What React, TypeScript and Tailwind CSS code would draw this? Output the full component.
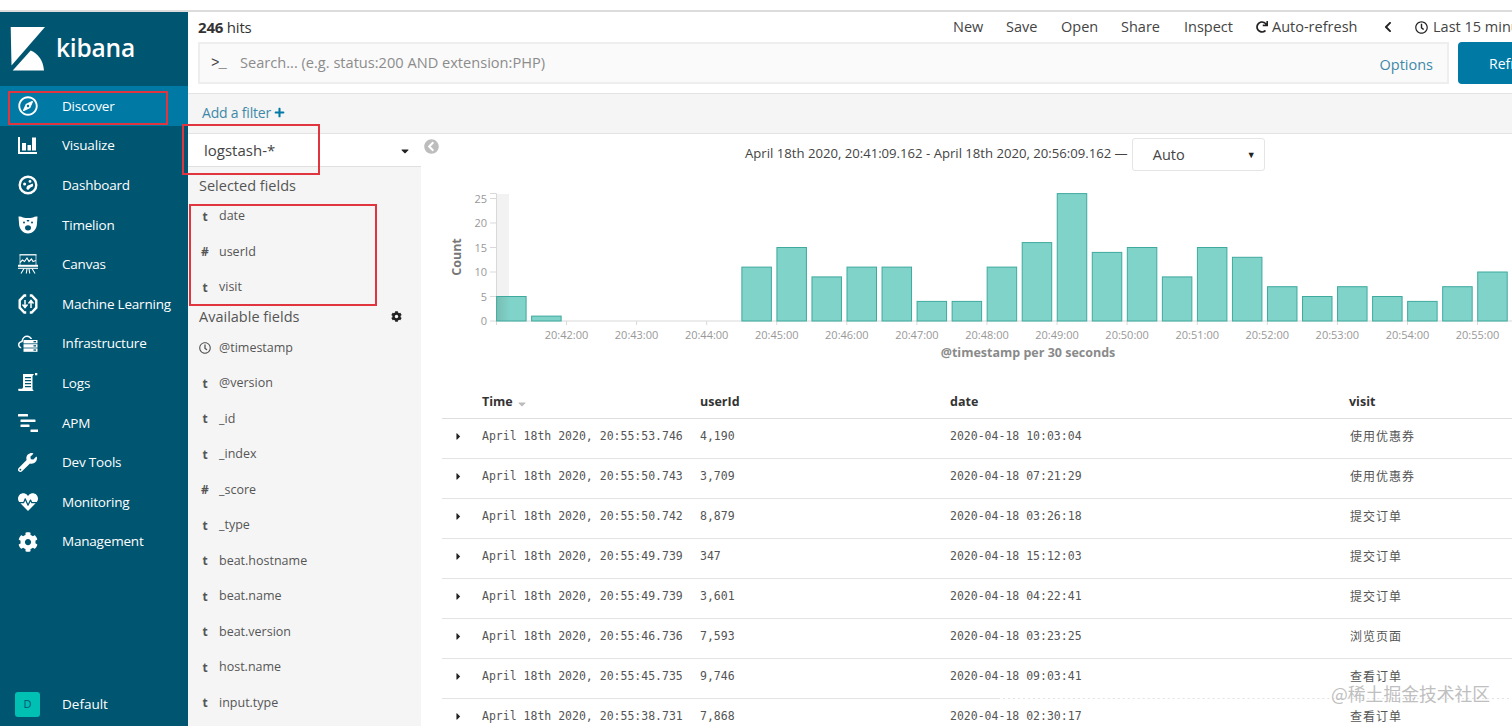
import React from "react";
import { FaCaretDown, FaCaretRight, FaChevronCircleLeft, FaChevronLeft, FaCog, FaHeartbeat, FaPlus, FaRedo, FaRegClock, FaRegCompass, FaWrench } from "react-icons/fa";

const LogoMark = () => (
  <svg width="36" height="45" viewBox="0 0 36 45" fill="white" className="shrink-0">
    <path d="M0.7 0 H35 L1.5 38.5 Z" />
    <path d="M2.7 43.5 H34 C33 33 28 26.5 20.7 23.5 Z" />
  </svg>
);

const I = ({ children }: { children: React.ReactNode }) => (
  <svg width="20" height="20" viewBox="0 0 20 20" fill="white">{children}</svg>
);

const Visualize = () => (
  <I>
    <path d="M0 1h2v15h17v2H0z" />
    <rect x="4" y="7" width="4" height="7.5" />
    <rect x="9.5" y="9" width="3.5" height="5.5" />
    <rect x="14" y="1.5" width="4" height="13" />
  </I>
);
const Dashboard = () => (
  <I>
    <path fillRule="evenodd" d="M10 .5a9.5 9.5 0 1 1 0 19 9.5 9.5 0 0 1 0-19zm0 2.4a7.1 7.1 0 1 0 0 14.2 7.1 7.1 0 0 0 0-14.2z" />
    <circle cx="6.6" cy="9" r="1.5" />
    <circle cx="12" cy="6.4" r="1.4" />
    <path d="M14.4 8.6a2 2 0 0 1-.6 3.5c-1.2.4-1.8 1.1-3 2.3-1.2.9-2.7-.2-2.3-1.7.4-1.5 1.5-2.3 2.7-2.6 1.3-.3 2-.9 3.2-1.5z" />
  </I>
);
const Timelion = () => (
  <I>
    <path d="M0.5 1.5Q3 1 5 2.5L7.5 3H12.5L15 2.5Q17 1 19.5 1.5L19 8C19 14 15 18.5 10 18.5S1 14 1 8Z" />
    <circle cx="6" cy="7.5" r="1" fill="#005571" />
    <circle cx="14" cy="7.5" r="1" fill="#005571" />
    <ellipse cx="10" cy="12.8" rx="3" ry="2.6" fill="#005571" />
    <rect x="8.8" y="5" width="2.4" height="1.4" fill="#005571" />
  </I>
);
const Canvas = () => (
  <svg width="20" height="20" viewBox="0 0 20 20" fill="none" stroke="white" strokeWidth="1.1">
    <path d="M1.5 .8H18.5" strokeWidth="1.3" />
    <path d="M2 1v10M18 1v10" strokeWidth="0.7" />
    <path d="M2 8.5l2.5-2.5 2 1.5L9 4l2 3.5L13.5 5l1.5 2.5L18 6.5" />
    <path d="M0 11.8h20" strokeWidth="2" />
    <path d="M0 14.3h20" strokeWidth="1.1" />
    <path d="M6 14.5l-3 5M9 14.5L8.3 19.5M11 14.5l.7 5M14 14.5l3 5" />
  </svg>
);
const Machine = () => (
  <svg width="20" height="20" viewBox="0 0 20 20" fill="none" stroke="white" strokeWidth="2.4">
    <path d="M8.2 1.5H6.3L1.7 6.3v7.4L6.3 18.5H8.2M11.8 1.5h1.9l4.6 4.8v7.4L13.7 18.5H11.8" />
    <path d="M7 6v7M4.5 10.5L7 13.5l2.5-3M13 14V7M10.5 9.5L13 6.5l2.5 3" strokeWidth="1.5" />
  </svg>
);
const Infrastructure = () => (
  <I>
    <path d="M3.2 14.5C1.2 14 0 12.5 0 10.7c0-1.900 1.4-3.400 3.300-3.700C4 3.500 6.500 1.500 9 1.500c2.300 0 4.200 1.200 5.200 3.500h-1.700C11.600 3.700 10.400 3 9 3 6.800 3 4.900 4.900 4.600 8.300 2.800 8.100 1.500 9.200 1.500 10.700c0 1.300.8 2.200 1.700 2.400z" />
    <rect x="5.5" y="6" width="14" height="3.4" />
    <rect x="5.5" y="10.2" width="14" height="3.4" />
    <rect x="5.5" y="14.4" width="14" height="3.4" />
    <rect x="15.5" y="7" width="2.5" height="1.3" fill="#005571" />
    <rect x="15.5" y="11.2" width="2.5" height="1.3" fill="#005571" />
    <rect x="15.5" y="15.4" width="2.5" height="1.3" fill="#005571" />
  </I>
);
const Logs = () => (
  <I>
    <path fillRule="evenodd" d="M5 1h11l-1.500 2v12.500c0 1 .5 2 1.500 2.500H1c-1 0-1-1.500-.5-2.200h3c.8 0 1.500-.7 1.500-1.500zm2 3v1.300h6V4zm0 3v1.300h6V7zm0 3v1.300h6V10zm0 3v1.300h6V13z" />
    <rect x="17" y="0" width="2.3" height="2.3" />
  </I>
);
const Apm = () => (
  <I>
    <rect x="0" y="1" width="10" height="2.5" rx="0.5" />
    <rect x="2.5" y="6.5" width="15" height="2.5" rx="0.5" />
    <rect x="2.5" y="11.5" width="9" height="2.5" rx="0.5" />
    <rect x="12.5" y="16.5" width="8" height="2.5" rx="0.5" />
  </I>
);

const nav: [string, React.ReactNode][] = [
  ["Discover", <FaRegCompass size={20} color="white" />],
  ["Visualize", <Visualize />],
  ["Dashboard", <Dashboard />],
  ["Timelion", <Timelion />],
  ["Canvas", <Canvas />],
  ["Machine Learning", <Machine />],
  ["Infrastructure", <Infrastructure />],
  ["Logs", <Logs />],
  ["APM", <Apm />],
  ["Dev Tools", <FaWrench size={19} color="white" />],
  ["Monitoring", <FaHeartbeat size={20} color="white" />],
  ["Management", <FaCog size={20} color="white" />],
];

const fields: [string, string][] = [
  ["clock", "@timestamp"],
  ["t", "@version"],
  ["t", "_id"],
  ["t", "_index"],
  ["#", "_score"],
  ["t", "_type"],
  ["t", "beat.hostname"],
  ["t", "beat.name"],
  ["t", "beat.version"],
  ["t", "host.name"],
  ["t", "input.type"],
];

const Field = ({ type, name }: { type: string; name: string }) => (
  <div className="flex h-[35.5px] items-center pl-[11px] text-[12.5px] text-[#555]">
    <span className="flex w-[20px] justify-start font-bold text-[12px] text-[#555]">
      {type === "clock" ? <FaRegClock size={12} /> : <span className="w-[12px] text-center">{type}</span>}
    </span>
    <span>{name}</span>
  </div>
);

const bars = [5, 1, 0, 0, 0, 0, 0, 11, 15, 9, 11, 11, 4, 4, 11, 16, 26, 14, 15, 9, 15, 13, 7, 5, 7, 5, 4, 7, 10];
const minutes = Array.from({ length: 14 }, (_, i) => 42 + i);

const Chart = () => (
  <svg width="1091" height="190" viewBox="421 180 1091 190" className="block" style={{ fontFamily: '"Open Sans", sans-serif' }}>
    <defs>
      <linearGradient id="firstBar" x1="0" x2="1" y1="0" y2="0">
        <stop offset="0" stopColor="#78bdb4" />
        <stop offset="0.45" stopColor="#7fd3c9" />
      </linearGradient>
    </defs>
    <rect x="497" y="194" width="12" height="127" fill="#f2f2f2" />
    <path d="M496.5 193.5V325M490 193.5h6.5" stroke="#d9d9d9" fill="none" />
    {[0, 5, 10, 15, 20, 25].map((v) => {
      const y = 321 - v * 4.9;
      return (
        <g key={v}>
          <path d={`M490 ${y}h6.5`} stroke="#d9d9d9" />
          <text x="487" y={y + 4} textAnchor="end" fontSize="11" fill="#999">{v}</text>
        </g>
      );
    })}
    <path d="M496.5 321H1512" stroke="#d9d9d9" />
    {minutes.map((m, i) => {
      const x = 566.5 + i * 70.08;
      return (
        <g key={m}>
          <path d={`M${x} 321v4`} stroke="#d9d9d9" />
          <text x={x} y="339" textAnchor="middle" fontSize="11" fill="#999">{`20:${m}:00`}</text>
        </g>
      );
    })}
    {bars.map((v, i) =>
      v === 0 ? null : (
        <rect
          key={i}
          x={496.6 + i * 35.04}
          y={321 - v * 4.9}
          width="29.5"
          height={v * 4.9}
          fill={i === 0 ? "url(#firstBar)" : "#7fd3c9"}
          stroke="#3fa99e"
          strokeWidth="1"
        />
      )
    )}
    <text x="0" y="0" transform="translate(461 257) rotate(-90)" textAnchor="middle" fontSize="12.5" fontWeight="700" fill="#777">Count</text>
    <text x="1028" y="357" textAnchor="middle" fontSize="12.5" fontWeight="700" fill="#8a8a8a">@timestamp per 30 seconds</text>
  </svg>
);

const rows = [
  ["20:55:53.746", "4,190", "10:03:04", "使用优惠券"],
  ["20:55:50.743", "3,709", "07:21:29", "使用优惠券"],
  ["20:55:50.742", "8,879", "03:26:18", "提交订单"],
  ["20:55:49.739", "347", "15:12:03", "提交订单"],
  ["20:55:49.739", "3,601", "04:22:41", "提交订单"],
  ["20:55:46.736", "7,593", "03:23:25", "浏览页面"],
  ["20:55:45.735", "9,746", "09:03:41", "查看订单"],
  ["20:55:38.731", "7,868", "02:30:17", "查看订单"],
];

const cols = "grid grid-cols-[40px_218px_250px_399px_1fr] items-center";

export default function App() {
  return (
    <div className="relative h-[726px] w-[1512px] overflow-hidden bg-white font-['Open_Sans',sans-serif] text-[#444]">
      <div className="h-[12px] border-b-2 border-[#dcdcdc]" />
      <div className="flex h-[714px]">
        <aside className="flex w-[188px] shrink-0 flex-col bg-[#005571] text-white">
          <div className="flex h-[74.2px] shrink-0 items-start pl-[10px] pt-[15px]">
            <LogoMark />
            <span className="ml-[10px] mt-[1px] text-[24.5px] font-semibold leading-[40px] tracking-[-0.2px]">kibana</span>
          </div>
          {nav.map(([label, icon], i) => (
            <div key={label} className={`flex h-[39.6px] shrink-0 items-center ${i === 0 ? "bg-[#0079a5]" : ""}`}>
              <span className="flex w-[62px] shrink-0 justify-start pl-[18px]">{icon}</span>
              <span className="text-[13.5px] tracking-[-0.2px]">{label}</span>
            </div>
          ))}
          <div className="mb-[4px] mt-auto flex h-[34px] shrink-0 items-center pb-[2px]">
            <span className="ml-[15px] flex h-[25px] w-[25px] items-center justify-center rounded-[3px] bg-[#00bfb3] text-[11px] text-[#005571]">D</span>
            <span className="ml-[22px] text-[13.5px]">Default</span>
          </div>
        </aside>

        <main className="flex min-w-0 flex-1 flex-col">
          <div className="flex h-[30px] shrink-0 items-center whitespace-nowrap pl-[10px] text-[14.5px] *:shrink-0">
            <span className="w-[755px] text-[15px] tracking-[-0.2px] text-[#333]"><b className="font-bold">246</b> hits</span>
            <span className="w-[53px]">New</span>
            <span className="w-[55px]">Save</span>
            <span className="w-[60px]">Open</span>
            <span className="w-[63px]">Share</span>
            <span className="w-[72px]">Inspect</span>
            <FaRedo size={12} className="mr-[4px] text-[#222]" />
            <span className="w-[110px]">Auto-refresh</span>
            <FaChevronLeft size={12} className="mr-[21px] text-[#222]" />
            <FaRegClock size={13} className="mr-[5px] text-[#222]" />
            <span>Last 15 minutes</span>
          </div>

          <div className="flex h-[42px] shrink-0 gap-[9px] pl-[10px]">
            <div className="flex w-[1251px] shrink-0 items-center border-2 border-[#eeeeee] bg-[#fafafa] pl-[11px] pr-[14px] text-[14.6px] text-[#8c8c8c]">
              <span className="w-[29px] font-['Liberation_Mono',monospace] text-[14px] tracking-[-1px] text-[#444]">&gt;_</span>
              <span className="flex-1">Search... (e.g. status:200 AND extension:PHP)</span>
              <span className="pt-[4px] text-[14.5px] text-[#3f89a8]">Options</span>
            </div>
            <div className="flex w-[54px] shrink-0 items-center overflow-hidden rounded-l-[4px] bg-[#0079a5] pl-[31px] text-[14px] text-white whitespace-nowrap">Refresh</div>
          </div>

          <div className="mt-[9px] flex h-[41px] shrink-0 items-center border-y border-[#e3e3e3] bg-[#f5f5f5] pb-[3px] pl-[14px] text-[14px] tracking-[-0.2px] text-[#3f89a8]">
            Add a filter
            <FaPlus size={11} className="ml-[3px] text-[#0079a5]" />
          </div>

          <div className="flex min-h-0 flex-1">
            <div className="w-[233px] shrink-0 bg-[#f5f5f5]">
              <div className="flex h-[33px] items-center justify-between border-b border-[#e0e0e0] bg-white pl-[16px] pr-[10px] pt-[1px] text-[15px] text-[#444]">
                logstash-*
                <FaCaretDown size={12} className="text-[#222]" />
              </div>
              <div className="flex h-[32px] items-center pl-[11px] pt-[6px] text-[14.5px] text-[#555]">Selected fields</div>
              <Field type="t" name="date" />
              <Field type="#" name="userId" />
              <Field type="t" name="visit" />
              <div className="flex h-[25px] items-center justify-between pb-[3px] pl-[11px] pr-[19px] text-[14.5px] text-[#555]">
                Available fields
                <FaCog size={11} className="text-[#222]" />
              </div>
              {fields.map(([t, n]) => (
                <Field key={n} type={t} name={n} />
              ))}
            </div>

            <div className="relative min-w-0 flex-1">
              <FaChevronCircleLeft size={15} className="absolute left-[3px] top-[5px] text-[#bdbdbd]" />
              <div className="flex h-[46px] items-start pl-[324px] pt-[4px] text-[13.13px] whitespace-nowrap text-[#444]">
                <span className="pt-[6px]">April 18th 2020, 20:41:09.162 - April 18th 2020, 20:56:09.162 —</span>
                <span className="ml-[4px] flex h-[33px] w-[133px] items-center justify-between rounded-[3px] border border-[#e5e5e5] pl-[20px] pr-[8px] text-[14.5px]">
                  Auto
                  <span className="text-[9px] text-[#222]">▼</span>
                </span>
              </div>
              <Chart />
              <div className="ml-[21px] font-['DejaVu_Sans_Mono','Noto_Sans_CJK_SC',monospace] text-[11.5px] text-[#555]">
                <div className={`${cols} h-[49px] border-b border-[#dedede] pt-[17px] font-['Open_Sans',sans-serif] text-[12.5px] font-bold text-[#333]`}>
                  <span />
                  <span className="flex items-center gap-[3px]">Time<FaCaretDown size={12} className="mt-[3px] text-[#bbb]" /></span>
                  <span>userId</span>
                  <span>date</span>
                  <span>visit</span>
                </div>
                {rows.map((r, i) => (
                  <div key={i} className={`${cols} h-[40px] border-b border-[#e3e3e3] pb-[4px]`}>
                    <FaCaretRight size={11} className="ml-[11px] text-[#222]" />
                    <span>April 18th 2020, {r[0]}</span>
                    <span>{r[1]}</span>
                    <span>2020-04-18 {r[2]}</span>
                    <span className="pl-[1px] text-[12px] tracking-[1px]">{r[3]}</span>
                  </div>
                ))}
              </div>
            </div>
          </div>
        </main>
      </div>

      <div className="absolute left-[8px] top-[91px] h-[34px] w-[160px] border-2 border-[#e0343f]" />
      <div className="absolute left-[182px] top-[124px] h-[51px] w-[138px] border-2 border-[#e0343f]" />
      <div className="absolute left-[189px] top-[204px] h-[102px] w-[188px] border-2 border-[#e0343f]" />
      <div className="absolute left-[1000px] right-0 top-[698px] border-t border-dashed border-white" />
      <div className="absolute left-[1331px] top-[681px] font-['Noto_Sans_CJK_SC',sans-serif] text-[17.8px] leading-[24px] text-[#b0b0b0] opacity-80">@稀土掘金技术社区</div>
    </div>
  );
}
